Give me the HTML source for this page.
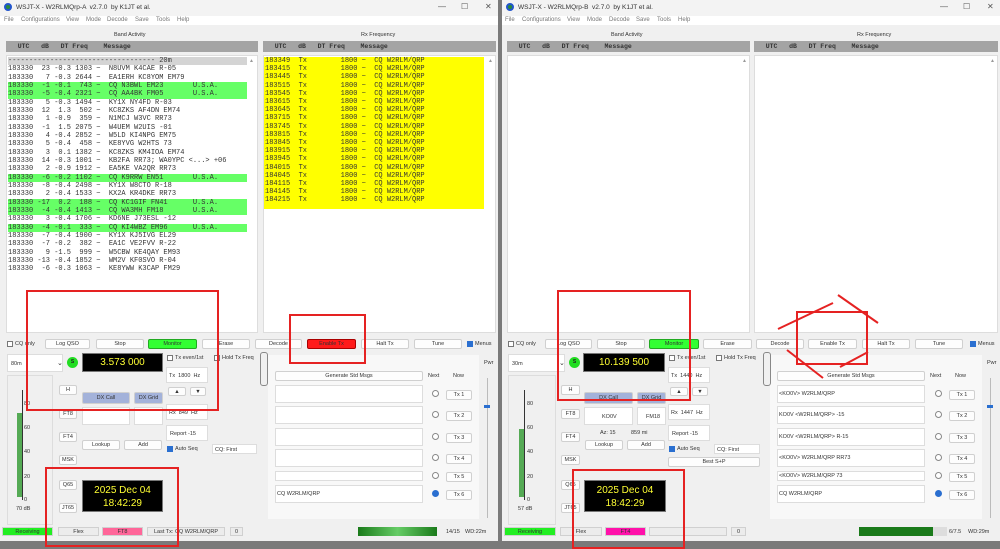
<!DOCTYPE html><html><head><meta charset="utf-8"><style>
*{box-sizing:border-box;margin:0;padding:0}
body{width:1000px;height:541px;overflow:hidden;background:#7a7a7a;font-family:"Liberation Sans",sans-serif;font-size:6px;color:#222;position:relative}
.w{position:absolute;top:0;width:498px;height:541px;background:#f0f0f0;overflow:hidden}
.a{position:absolute}
.tb{position:absolute;left:0;top:0;width:100%;height:16px;background:#f3f3f3;font-size:6.5px;color:#333}
.mb{position:absolute;left:0;top:16px;width:100%;height:9px;background:#fff;font-size:6px;color:#777}
.mb span{position:absolute;top:1px}
.hd{position:absolute;height:11px;background:#a4a4a4;font-family:"Liberation Mono",monospace;font-size:6.5px;font-weight:bold;color:#333;line-height:11px;white-space:pre}
.ls{position:absolute;background:#fff;border:1px solid #ddd}
.r{position:absolute;height:8.33px;font-family:"Liberation Mono",monospace;font-size:7px;line-height:8.33px;white-space:pre;color:#333}
.g{background:#66ff66}.y{background:#ffff00}
.b{position:absolute;background:#fdfdfd;border:1px solid #d0d0d0;border-radius:2px;text-align:center;font-size:5.5px;line-height:8px;color:#333}
.cb{position:absolute;width:6px;height:6px;border:1px solid #777;background:#fff}
.ck{background:#2a6fd0;border-color:#2a6fd0}
.blk{position:absolute;background:#000;color:#ffff33;text-align:center;border:1px solid #777}
.box{position:absolute;background:#fff;border:1px solid #ddd}
.red{position:absolute;border:2px solid #e52222}
.t{position:absolute;font-size:5.5px;color:#333;white-space:nowrap}
.rad{position:absolute;width:7px;height:7px;border:1px solid #888;border-radius:50%;background:#fff}
</style></head><body>

<!-- LEFT WINDOW -->
<div class="w" style="left:0">
<div class="tb"><div class="a" style="left:4px;top:3px;width:8px;height:8px;border-radius:50%;background:#2a8a3a;border:2px solid #2255cc"></div><span class="a" style="left:16px;top:4px">WSJT-X - W2RLMQrp-A &nbsp;v2.7.0 &nbsp;by K1JT et al.</span><span class="a" style="left:438px;top:2px;font-size:8px;color:#555">—</span><span class="a" style="left:461px;top:2px;font-size:8px;color:#555">☐</span><span class="a" style="left:485px;top:2px;font-size:8px;color:#555">✕</span></div>
<div class="mb"><span style="left:4px">File</span><span style="left:21px">Configurations</span><span style="left:66px">View</span><span style="left:86px">Mode</span><span style="left:107px">Decode</span><span style="left:135px">Save</span><span style="left:156px">Tools</span><span style="left:177px">Help</span></div>
<div class="t" style="left:114px;top:32px">Band Activity</div>
<div class="t" style="left:361px;top:32px">Rx Frequency</div>
<div class="hd" style="left:6px;top:41px;width:252px">   UTC   dB   DT Freq    Message</div>
<div class="hd" style="left:263px;top:41px;width:233px">   UTC   dB   DT Freq    Message</div>
<div class="ls" style="left:6px;top:55px;width:252px;height:278px"></div>
<div class="ls" style="left:263px;top:55px;width:233px;height:278px"></div>
<div class="a" style="left:249px;top:58px;font-size:5px;color:#999">▲</div>
<div class="a" style="left:488px;top:58px;font-size:5px;color:#999">▲</div>
<div class="r" style="left:8px;top:57px;width:239px;background:#d4d4d4">----------------------------------- 20m</div>
<div class="r" style="left:8px;top:65.33px">183330  23 -0.3 1303 ~  N8UVM K4CAE R-05</div>
<div class="r" style="left:8px;top:73.67px">183330   7 -0.3 2644 ~  EA1ERH KC8YOM EM79</div>
<div class="r g" style="left:8px;top:82px;width:239px">183330  -1 -0.1  743 ~  CQ N3BWL EM23       U.S.A.</div>
<div class="r g" style="left:8px;top:90.33px;width:239px">183330  -5 -0.4 2321 ~  CQ AA4BK FM05       U.S.A.</div>
<div class="r" style="left:8px;top:98.67px">183330   5 -0.3 1494 ~  KY1X NY4FD R-03</div>
<div class="r" style="left:8px;top:107px">183330  12  1.3  502 ~  KC8ZKS AF4DN EM74</div>
<div class="r" style="left:8px;top:115.33px">183330   1 -0.9  359 ~  N1MCJ W3VC RR73</div>
<div class="r" style="left:8px;top:123.67px">183330  -1  1.5 2075 ~  W4UEM W2UIS -01</div>
<div class="r" style="left:8px;top:132px">183330   4 -0.4 2852 ~  W5LD KI4NPG EM75</div>
<div class="r" style="left:8px;top:140.33px">183330   5 -0.4  458 ~  KE8YVG W2HTS 73</div>
<div class="r" style="left:8px;top:148.67px">183330   3  0.1 1382 ~  KC8ZKS KM4IOA EM74</div>
<div class="r" style="left:8px;top:157px">183330  14 -0.3 1001 ~  KB2FA RR73; WA0YPC &lt;...&gt; +06</div>
<div class="r" style="left:8px;top:165.33px">183330   2 -0.9 1912 ~  EA5KE VA2QR RR73</div>
<div class="r g" style="left:8px;top:173.67px;width:239px">183330  -6 -0.2 1102 ~  CQ K9RRW EN51       U.S.A.</div>
<div class="r" style="left:8px;top:182px">183330  -8 -0.4 2498 ~  KY1X W8CTO R-18</div>
<div class="r" style="left:8px;top:190.33px">183330   2 -0.4 1533 ~  KX2A KR4DKE RR73</div>
<div class="r g" style="left:8px;top:198.67px;width:239px">183330 -17  0.2  188 ~  CQ KC1GIF FN41      U.S.A.</div>
<div class="r g" style="left:8px;top:207px;width:239px">183330  -4 -0.4 1413 ~  CQ WA3MH FM18       U.S.A.</div>
<div class="r" style="left:8px;top:215.33px">183330   3 -0.4 1706 ~  KD6NE J73ESL -12</div>
<div class="r g" style="left:8px;top:223.67px;width:239px">183330  -4 -0.1  333 ~  CQ KI4WBZ EM96      U.S.A.</div>
<div class="r" style="left:8px;top:232px">183330  -7 -0.4 1900 ~  KY1X KJ5IVG EL29</div>
<div class="r" style="left:8px;top:240.33px">183330  -7 -0.2  382 ~  EA1C VE2FVV R-22</div>
<div class="r" style="left:8px;top:248.67px">183330   9 -1.5  999 ~  W5CBW KE4QAY EM93</div>
<div class="r" style="left:8px;top:257px">183330 -13 -0.4 1852 ~  WM2V KF0SVO R-04</div>
<div class="r" style="left:8px;top:265.33px">183330  -6 -0.3 1063 ~  KE8YWW K3CAP FM29</div>

<div class="a y" style="left:264px;top:57px;width:220px;height:152px"></div>
<div class="r" style="left:265px;top:57px;line-height:8.2px">183349  Tx        1800 ~  CQ W2RLM/QRP
183415  Tx        1800 ~  CQ W2RLM/QRP
183445  Tx        1800 ~  CQ W2RLM/QRP
183515  Tx        1800 ~  CQ W2RLM/QRP
183545  Tx        1800 ~  CQ W2RLM/QRP
183615  Tx        1800 ~  CQ W2RLM/QRP
183645  Tx        1800 ~  CQ W2RLM/QRP
183715  Tx        1800 ~  CQ W2RLM/QRP
183745  Tx        1800 ~  CQ W2RLM/QRP
183815  Tx        1800 ~  CQ W2RLM/QRP
183845  Tx        1800 ~  CQ W2RLM/QRP
183915  Tx        1800 ~  CQ W2RLM/QRP
183945  Tx        1800 ~  CQ W2RLM/QRP
184015  Tx        1800 ~  CQ W2RLM/QRP
184045  Tx        1800 ~  CQ W2RLM/QRP
184115  Tx        1800 ~  CQ W2RLM/QRP
184145  Tx        1800 ~  CQ W2RLM/QRP
184215  Tx        1800 ~  CQ W2RLM/QRP</div>

<div class="cb" style="left:7px;top:341px"></div><div class="t" style="left:15px;top:341px">CQ only</div>
<div class="b" style="left:45px;top:339px;width:45px;height:10px">Log QSO</div>
<div class="b" style="left:96px;top:339px;width:48px;height:10px">Stop</div>
<div class="b" style="left:148px;top:339px;width:49px;height:10px;background:#33ff33;border-color:#2a2">Monitor</div>
<div class="b" style="left:202px;top:339px;width:48px;height:10px">Erase</div>
<div class="b" style="left:255px;top:339px;width:47px;height:10px">Decode</div>
<div class="b" style="left:307px;top:339px;width:49px;height:10px;background:#ff1a1a;border-color:#a00">Enable Tx</div>
<div class="b" style="left:361px;top:339px;width:48px;height:10px">Halt Tx</div>
<div class="b" style="left:414px;top:339px;width:48px;height:10px">Tune</div>
<div class="cb ck" style="left:467px;top:341px"></div><div class="t" style="left:475px;top:341px">Menus</div>

<div class="box" style="left:7px;top:354px;width:56px;height:18px"><span class="t" style="left:3px;top:6px">80m</span><span class="t" style="left:49px;top:4px;font-size:7px">⌄</span></div>
<div class="a" style="left:67px;top:357px;width:11px;height:11px;border-radius:50%;background:#22dd22;font-size:5px;text-align:center;line-height:11px;font-weight:bold">S</div>
<div class="blk" style="left:82px;top:353px;width:81px;height:19px;font-size:10px;line-height:17px">3.573 000</div>
<div class="cb" style="left:167px;top:355px"></div><div class="t" style="left:175px;top:355px">Tx even/1st</div>
<div class="cb" style="left:214px;top:355px"></div><div class="t" style="left:222px;top:355px">Hold Tx Freq</div>
<div class="box" style="left:166px;top:367px;width:42px;height:16px"><span class="t" style="left:2px;top:5px">Tx &nbsp;1800 &nbsp;Hz</span></div>
<div class="b" style="left:168px;top:387px;width:18px;height:9px">▲</div><div class="b" style="left:190px;top:387px;width:16px;height:9px">▼</div>
<div class="box" style="left:166px;top:404px;width:42px;height:16px"><span class="t" style="left:2px;top:5px">Rx &nbsp;849 &nbsp;Hz</span></div>
<div class="box" style="left:166px;top:425px;width:42px;height:16px"><span class="t" style="left:3px;top:5px">Report -15</span></div>
<div class="cb ck" style="left:167px;top:446px"></div><div class="t" style="left:175px;top:446px">Auto Seq</div>
<div class="box" style="left:212px;top:444px;width:45px;height:10px"><span class="t" style="left:2px;top:2px">CQ: First</span></div>

<div class="a" style="left:7px;top:375px;width:46px;height:150px;border:1px solid #ddd"></div>
<div class="a" style="left:17px;top:413px;width:6px;height:84px;background:#55aa55"></div>
<div class="a" style="left:22px;top:390px;width:1px;height:110px;background:#333"></div>
<div class="t" style="left:24px;top:401px">80</div><div class="t" style="left:24px;top:425px">60</div><div class="t" style="left:24px;top:449px">40</div><div class="t" style="left:24px;top:474px">20</div><div class="t" style="left:24px;top:497px">0</div>
<div class="t" style="left:16px;top:506px">70 dB</div>

<div class="b" style="left:59px;top:385px;width:18px;height:10px">H</div>
<div class="b" style="left:59px;top:409px;width:18px;height:10px">FT8</div>
<div class="b" style="left:59px;top:432px;width:18px;height:10px">FT4</div>
<div class="b" style="left:59px;top:455px;width:18px;height:10px">MSK</div>
<div class="b" style="left:59px;top:480px;width:18px;height:10px">Q65</div>
<div class="b" style="left:59px;top:503px;width:18px;height:10px">JT65</div>
<div class="b" style="left:82px;top:392px;width:48px;height:12px;background:#a3b2da;line-height:10px">DX Call</div>
<div class="b" style="left:134px;top:392px;width:29px;height:12px;background:#a3b2da;line-height:10px">DX Grid</div>
<div class="box" style="left:82px;top:407px;width:48px;height:18px"></div>
<div class="box" style="left:134px;top:407px;width:29px;height:18px"></div>
<div class="b" style="left:82px;top:440px;width:38px;height:10px">Lookup</div>
<div class="b" style="left:124px;top:440px;width:38px;height:10px">Add</div>
<div class="blk" style="left:82px;top:480px;width:81px;height:32px;font-size:10px;line-height:13px;padding-top:3px">2025 Dec 04<br>18:42:29</div>

<div class="a" style="left:268px;top:355px;width:211px;height:164px;background:#f8f8f8"></div>
<div class="b" style="left:275px;top:371px;width:148px;height:10px">Generate Std Msgs</div>
<div class="t" style="left:428px;top:373px">Next</div><div class="t" style="left:453px;top:373px">Now</div>
<div class="box" style="left:275px;top:385px;width:148px;height:18px"></div>
<div class="box" style="left:275px;top:406px;width:148px;height:18px"></div>
<div class="box" style="left:275px;top:428px;width:148px;height:18px"></div>
<div class="box" style="left:275px;top:449px;width:148px;height:18px"></div>
<div class="box" style="left:275px;top:471px;width:148px;height:10px"></div>
<div class="box" style="left:275px;top:485px;width:148px;height:18px"><span class="t" style="left:1px;top:5px">CQ W2RLM/QRP</span></div>
<div class="rad" style="left:432px;top:390px"></div><div class="rad" style="left:432px;top:411px"></div><div class="rad" style="left:432px;top:433px"></div><div class="rad" style="left:432px;top:454px"></div><div class="rad" style="left:432px;top:472px"></div><div class="rad" style="left:432px;top:490px;background:#2a6fd0;border-color:#2a6fd0"></div>
<div class="b" style="left:446px;top:390px;width:26px;height:10px">Tx 1</div>
<div class="b" style="left:446px;top:411px;width:26px;height:10px">Tx 2</div>
<div class="b" style="left:446px;top:433px;width:26px;height:10px">Tx 3</div>
<div class="b" style="left:446px;top:454px;width:26px;height:10px">Tx 4</div>
<div class="b" style="left:446px;top:472px;width:26px;height:10px">Tx 5</div>
<div class="b" style="left:446px;top:490px;width:26px;height:10px">Tx 6</div>
<div class="t" style="left:484px;top:360px">Pwr</div>
<div class="a" style="left:487px;top:378px;width:1px;height:140px;background:#bbb"></div>
<div class="a" style="left:484px;top:405px;width:6px;height:3px;background:#2a6fd0"></div>
<div class="a" style="left:260px;top:352px;width:8px;height:34px;border:1px solid #888;border-radius:3px"></div>

<div class="a" style="left:0;top:525px;width:498px;height:16px;background:#f0f0f0"></div>
<div class="b" style="left:2px;top:527px;width:51px;height:9px;background:#22ee22;border-radius:0">Receiving</div>
<div class="b" style="left:58px;top:527px;width:41px;height:9px;background:#ececec;border-radius:0">Flex</div>
<div class="b" style="left:102px;top:527px;width:41px;height:9px;background:#ff6699;border-radius:0">FT8</div>
<div class="b" style="left:147px;top:527px;width:78px;height:9px;background:#ececec;border-radius:0">Last Tx: CQ W2RLM/QRP</div>
<div class="b" style="left:230px;top:527px;width:13px;height:9px;background:#ececec;border-radius:0">0</div>
<div class="a" style="left:358px;top:527px;width:79px;height:9px;background:linear-gradient(90deg,#1a7a1a,#6c6 50%,#1a7a1a)"></div>
<div class="t" style="left:446px;top:529px">14/15</div><div class="t" style="left:465px;top:529px">WD:22m</div>
</div>

<!-- RIGHT WINDOW -->
<div class="w" style="left:502px">
<div class="tb"><div class="a" style="left:4px;top:3px;width:8px;height:8px;border-radius:50%;background:#2a8a3a;border:2px solid #2255cc"></div><span class="a" style="left:16px;top:4px">WSJT-X - W2RLMQrp-B &nbsp;v2.7.0 &nbsp;by K1JT et al.</span><span class="a" style="left:438px;top:2px;font-size:8px;color:#555">—</span><span class="a" style="left:461px;top:2px;font-size:8px;color:#555">☐</span><span class="a" style="left:485px;top:2px;font-size:8px;color:#555">✕</span></div>
<div class="mb"><span style="left:3px">File</span><span style="left:20px">Configurations</span><span style="left:65px">View</span><span style="left:85px">Mode</span><span style="left:107px">Decode</span><span style="left:134px">Save</span><span style="left:155px">Tools</span><span style="left:176px">Help</span></div>
<div class="t" style="left:109px;top:32px">Band Activity</div>
<div class="t" style="left:355px;top:32px">Rx Frequency</div>
<div class="hd" style="left:5px;top:41px;width:243px">   UTC   dB   DT Freq    Message</div>
<div class="hd" style="left:252px;top:41px;width:244px">   UTC   dB   DT Freq    Message</div>
<div class="ls" style="left:5px;top:55px;width:243px;height:278px"></div>
<div class="ls" style="left:252px;top:55px;width:244px;height:278px"></div>
<div class="a" style="left:240px;top:58px;font-size:5px;color:#999">▲</div>
<div class="a" style="left:488px;top:58px;font-size:5px;color:#999">▲</div>

<div class="cb" style="left:6px;top:341px"></div><div class="t" style="left:14px;top:341px">CQ only</div>
<div class="b" style="left:43px;top:339px;width:47px;height:10px">Log QSO</div>
<div class="b" style="left:95px;top:339px;width:48px;height:10px">Stop</div>
<div class="b" style="left:147px;top:339px;width:50px;height:10px;background:#33ff33;border-color:#2a2">Monitor</div>
<div class="b" style="left:201px;top:339px;width:49px;height:10px">Erase</div>
<div class="b" style="left:254px;top:339px;width:48px;height:10px">Decode</div>
<div class="b" style="left:306px;top:339px;width:49px;height:10px">Enable Tx</div>
<div class="b" style="left:360px;top:339px;width:48px;height:10px">Halt Tx</div>
<div class="b" style="left:413px;top:339px;width:48px;height:10px">Tune</div>
<div class="cb ck" style="left:468px;top:341px"></div><div class="t" style="left:476px;top:341px">Menus</div>

<div class="box" style="left:6px;top:354px;width:57px;height:18px"><span class="t" style="left:3px;top:6px">30m</span><span class="t" style="left:50px;top:4px;font-size:7px">⌄</span></div>
<div class="a" style="left:67px;top:357px;width:11px;height:11px;border-radius:50%;background:#22dd22;font-size:5px;text-align:center;line-height:11px;font-weight:bold">S</div>
<div class="blk" style="left:81px;top:353px;width:82px;height:19px;font-size:10px;line-height:17px">10.139 500</div>
<div class="cb" style="left:167px;top:355px"></div><div class="t" style="left:175px;top:355px">Tx even/1st</div>
<div class="cb" style="left:214px;top:355px"></div><div class="t" style="left:222px;top:355px">Hold Tx Freq</div>
<div class="box" style="left:166px;top:367px;width:42px;height:16px"><span class="t" style="left:2px;top:5px">Tx &nbsp;1440 &nbsp;Hz</span></div>
<div class="b" style="left:168px;top:387px;width:18px;height:9px">▲</div><div class="b" style="left:190px;top:387px;width:16px;height:9px">▼</div>
<div class="box" style="left:166px;top:404px;width:42px;height:16px"><span class="t" style="left:2px;top:5px">Rx &nbsp;1447 &nbsp;Hz</span></div>
<div class="box" style="left:166px;top:425px;width:42px;height:16px"><span class="t" style="left:3px;top:5px">Report -15</span></div>
<div class="cb ck" style="left:167px;top:446px"></div><div class="t" style="left:175px;top:446px">Auto Seq</div>
<div class="box" style="left:212px;top:444px;width:46px;height:10px"><span class="t" style="left:2px;top:2px">CQ: First</span></div>
<div class="b" style="left:166px;top:457px;width:92px;height:10px">Best S+P</div>

<div class="a" style="left:6px;top:375px;width:48px;height:150px;border:1px solid #ddd"></div>
<div class="a" style="left:17px;top:429px;width:6px;height:68px;background:#55aa55"></div>
<div class="a" style="left:22px;top:390px;width:1px;height:110px;background:#333"></div>
<div class="t" style="left:25px;top:401px">80</div><div class="t" style="left:25px;top:425px">60</div><div class="t" style="left:25px;top:449px">40</div><div class="t" style="left:25px;top:474px">20</div><div class="t" style="left:25px;top:497px">0</div>
<div class="t" style="left:16px;top:506px">57 dB</div>

<div class="b" style="left:59px;top:385px;width:19px;height:10px">H</div>
<div class="b" style="left:59px;top:409px;width:19px;height:10px">FT8</div>
<div class="b" style="left:59px;top:432px;width:19px;height:10px">FT4</div>
<div class="b" style="left:59px;top:455px;width:19px;height:10px">MSK</div>
<div class="b" style="left:59px;top:480px;width:19px;height:10px">Q65</div>
<div class="b" style="left:59px;top:503px;width:19px;height:10px">JT65</div>
<div class="b" style="left:82px;top:392px;width:49px;height:12px;background:#a3b2da;line-height:10px">DX Call</div>
<div class="b" style="left:135px;top:392px;width:29px;height:12px;background:#a3b2da;line-height:10px">DX Grid</div>
<div class="box" style="left:82px;top:407px;width:49px;height:18px"><span class="t" style="left:17px;top:6px">KO0V</span></div>
<div class="box" style="left:135px;top:407px;width:29px;height:18px"><span class="t" style="left:8px;top:6px">FM18</span></div>
<div class="t" style="left:98px;top:430px">Az: 15</div><div class="t" style="left:129px;top:430px">859 mi</div>
<div class="b" style="left:83px;top:440px;width:38px;height:10px">Lookup</div>
<div class="b" style="left:125px;top:440px;width:38px;height:10px">Add</div>
<div class="blk" style="left:82px;top:480px;width:82px;height:32px;font-size:10px;line-height:13px;padding-top:3px">2025 Dec 04<br>18:42:29</div>

<div class="a" style="left:268px;top:355px;width:212px;height:164px;background:#f8f8f8"></div>
<div class="b" style="left:275px;top:371px;width:148px;height:10px">Generate Std Msgs</div>
<div class="t" style="left:428px;top:373px">Next</div><div class="t" style="left:453px;top:373px">Now</div>
<div class="box" style="left:275px;top:385px;width:148px;height:18px"><span class="t" style="left:1px;top:5px">&lt;KO0V&gt; W2RLM/QRP</span></div>
<div class="box" style="left:275px;top:406px;width:148px;height:18px"><span class="t" style="left:1px;top:5px">KO0V &lt;W2RLM/QRP&gt; -15</span></div>
<div class="box" style="left:275px;top:428px;width:148px;height:18px"><span class="t" style="left:1px;top:5px">KO0V &lt;W2RLM/QRP&gt; R-15</span></div>
<div class="box" style="left:275px;top:449px;width:148px;height:18px"><span class="t" style="left:1px;top:5px">&lt;KO0V&gt; W2RLM/QRP RR73</span></div>
<div class="box" style="left:275px;top:471px;width:148px;height:10px"><span class="t" style="left:1px;top:1px">&lt;KO0V&gt; W2RLM/QRP 73</span></div>
<div class="box" style="left:275px;top:485px;width:148px;height:18px"><span class="t" style="left:1px;top:5px">CQ W2RLM/QRP</span></div>
<div class="rad" style="left:433px;top:390px"></div><div class="rad" style="left:433px;top:411px"></div><div class="rad" style="left:433px;top:433px"></div><div class="rad" style="left:433px;top:454px"></div><div class="rad" style="left:433px;top:472px"></div><div class="rad" style="left:433px;top:490px;background:#2a6fd0;border-color:#2a6fd0"></div>
<div class="b" style="left:447px;top:390px;width:26px;height:10px">Tx 1</div>
<div class="b" style="left:447px;top:411px;width:26px;height:10px">Tx 2</div>
<div class="b" style="left:447px;top:433px;width:26px;height:10px">Tx 3</div>
<div class="b" style="left:447px;top:454px;width:26px;height:10px">Tx 4</div>
<div class="b" style="left:447px;top:472px;width:26px;height:10px">Tx 5</div>
<div class="b" style="left:447px;top:490px;width:26px;height:10px">Tx 6</div>
<div class="t" style="left:485px;top:360px">Pwr</div>
<div class="a" style="left:488px;top:378px;width:1px;height:140px;background:#bbb"></div>
<div class="a" style="left:485px;top:405px;width:6px;height:3px;background:#2a6fd0"></div>
<div class="a" style="left:261px;top:352px;width:8px;height:34px;border:1px solid #888;border-radius:3px"></div>

<div class="a" style="left:0;top:525px;width:498px;height:16px;background:#f0f0f0"></div>
<div class="b" style="left:2px;top:527px;width:52px;height:9px;background:#22ee22;border-radius:0">Receiving</div>
<div class="b" style="left:58px;top:527px;width:42px;height:9px;background:#ececec;border-radius:0">Flex</div>
<div class="b" style="left:103px;top:527px;width:41px;height:9px;background:#ff11aa;border-radius:0">FT4</div>
<div class="b" style="left:147px;top:527px;width:78px;height:9px;background:#ececec;border-radius:0"></div>
<div class="b" style="left:229px;top:527px;width:15px;height:9px;background:#ececec;border-radius:0">0</div>
<div class="a" style="left:357px;top:527px;width:74px;height:9px;background:#1a7a1a"></div>
<div class="a" style="left:431px;top:527px;width:14px;height:9px;background:#ddd"></div>
<div class="t" style="left:447px;top:529px">6/7.5</div><div class="t" style="left:466px;top:529px">WD:29m</div>
</div>

<!-- annotations -->
<div class="red" style="left:26px;top:290px;width:193px;height:121px"></div>
<div class="red" style="left:45px;top:467px;width:134px;height:80px"></div>
<div class="red" style="left:289px;top:314px;width:77px;height:50px"></div>
<div class="red" style="left:557px;top:290px;width:134px;height:111px"></div>
<div class="red" style="left:572px;top:469px;width:113px;height:80px"></div>
<div class="red" style="left:796px;top:311px;width:72px;height:54px"></div>
<svg class="a" style="left:0;top:0" width="1000" height="541"><g stroke="#e52222" stroke-width="2"><line x1="778" y1="329" x2="833" y2="303"/><line x1="838" y1="295" x2="878" y2="323"/><line x1="787" y1="350" x2="823" y2="378"/><line x1="868" y1="352" x2="840" y2="367"/></g></svg>
</body></html>
